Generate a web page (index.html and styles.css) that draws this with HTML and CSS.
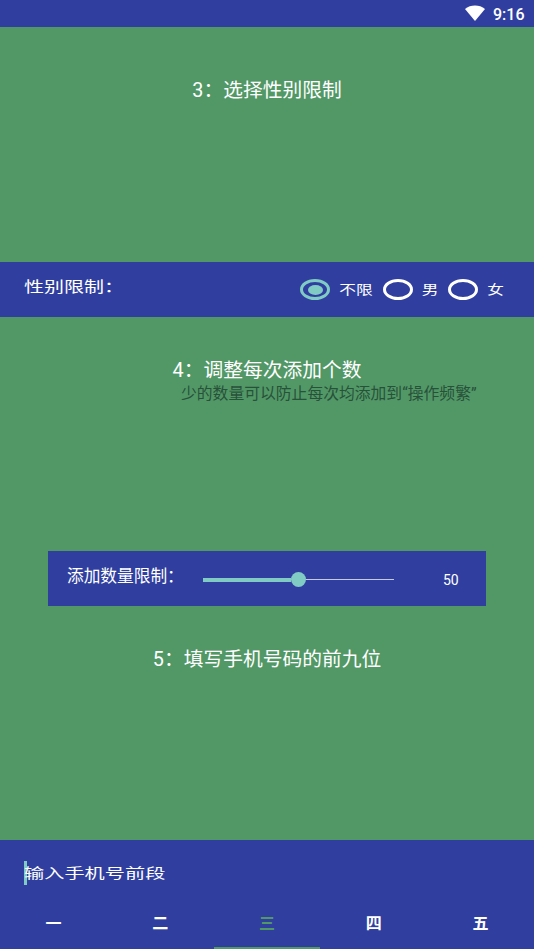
FILE: index.html
```html
<!DOCTYPE html>
<html lang="zh">
	<head>
		<meta charset="utf-8">
		<title>添加</title>
		<link rel="stylesheet" href="styles.css">
	</head>
	<body>
		<div class="statusbar">
			<svg class="wifi" width="20" height="16" viewBox="0 0 20 16"><path d="M0 4 C5.500 -0.600 14.500 -0.600 20 4 L10 16 Z" fill="#fff"/></svg>
			<span class="time">9:16</span>
		</div>

		<div class="content">
			<div class="step step-first">
				<div class="title">3：选择性别限制</div>
			</div>
			<div class="bar bar-gender">
				<div class="gender-label">性别限制：</div>
				<div class="radios">
					<span class="radio checked"><i></i></span><span class="radio-text">不限</span>
					<span class="radio"></span><span class="radio-text">男</span>
					<span class="radio"></span><span class="radio-text">女</span>
				</div>
			</div>
			<div class="step">
				<div class="title">4：调整每次添加个数</div>
				<div class="subtitle">少的数量可以防止每次均添加到“操作频繁”</div>
			</div>
			<div class="bar bar-count">
				<div class="count-label">添加数量限制：</div>
				<div class="slider">
					<div class="slider-done"></div>
					<div class="slider-thumb"></div>
					<div class="slider-rest"></div>
				</div>
				<div class="count-value">50</div>
			</div>
			<div class="step step-last">
				<div class="title">5：填写手机号码的前九位</div>
			</div>
		</div>

		<div class="bottom">
			<div class="phone">
				<span class="cursor"></span><span class="phone-hint">输入手机号前段</span>
			</div>
			<div class="tabs">
				<div class="tab">一</div>
				<div class="tab">二</div>
				<div class="tab active">三</div>
				<div class="tab">四</div>
				<div class="tab">五</div>
			</div>
		</div>
	</body>
</html>
```

FILE: styles.css
```css
html, body {
	margin: 0;
	padding: 0;
}

body {
	width: 534px;
	height: 949px;
	overflow: hidden;
	display: flex;
	flex-direction: column;
	background: #529866;
	color: #FFF;
	font-family: Roboto, "Noto Sans CJK SC", sans-serif;
}

.statusbar {
	height: 27px;
	flex: none;
	display: flex;
	align-items: center;
	justify-content: flex-end;
	padding-right: 9.500px;
	background: #303F9F;
}

.wifi {
	margin: 0 8px 1px 0;
}

.time {
	font-weight: 500;
	font-size: 16px;
	padding-top: 2px;
}

.content {
	flex: 1;
	display: flex;
	flex-direction: column;
}

.step {
	height: 192px;
	padding-top: 42px;
	display: flex;
	flex-direction: column;
	align-items: center;
}

.step-first {
	height: 183px;
	padding-top: 52px;
}

.title {
	font-size: 19.750px;
	line-height: 24px;
}

.subtitle {
	align-self: flex-start;
	margin: -1px 0 0 181px;
	font-size: 15.800px;
	line-height: 24px;
	color: #28513A;
}

.bar {
	height: 55px;
	flex: none;
	display: flex;
	align-items: center;
	background: #303F9F;
}

.bar-gender {
	padding-left: 24px;
}

.gender-label {
	font-size: 20px;
	line-height: 24px;
	margin-bottom: 6px;
	transform: scaleY(.75);
	transform-origin: left center;
}

.radios {
	margin-left: auto;
	margin-right: 30px;
	display: flex;
	align-items: center;
}

.radio {
	width: 30px;
	height: 21px;
	box-sizing: border-box;
	border: 3px solid #FFF;
	border-radius: 50%;
	display: flex;
	align-items: center;
	justify-content: center;
}

.radio.checked {
	border-color: #80CBC4;
}

.radio i {
	width: 15px;
	height: 10px;
	border-radius: 50%;
	background: #80CBC4;
}

.radio-text {
	margin: 0 10px 0 9px;
	font-size: 16.700px;
	line-height: 20px;
	transform: scaleY(.78);
}

.radio-text:last-child {
	margin-right: 0;
}

.bar-count {
	margin: 0 48px;
	padding-left: 19px;
}

.count-label {
	width: 136px;
	flex: none;
	font-size: 16.700px;
	line-height: 24px;
	margin-bottom: 3px;
}

.slider {
	width: 191px;
	flex: none;
	display: flex;
	align-items: center;
	margin-top: 2px;
}

.slider-done {
	width: 88px;
	height: 4px;
	background: #80CBC4;
}

.slider-thumb {
	width: 15px;
	height: 15px;
	flex: none;
	border-radius: 50%;
	background: #80CBC4;
}

.slider-rest {
	flex: 1;
	height: 1.500px;
	background: #C5CAE9;
}

.count-value {
	margin-left: 49px;
	font-size: 14px;
	padding-top: 2px;
}

.bottom {
	height: 109px;
	flex: none;
	background: #303F9F;
	display: flex;
	flex-direction: column;
}

.phone {
	height: 62px;
	padding-left: 24px;
	display: flex;
	align-items: center;
	margin-top: 2px;
}

.cursor {
	width: 2.500px;
	height: 24px;
	flex: none;
	background: #80CBC4;
}

.phone-hint {
	margin-left: -2.500px;
	font-size: 20.200px;
	line-height: 24px;
	transform: scaleY(.68);
}

.tabs {
	flex: 1;
	display: flex;
}

.tab {
	flex: 1;
	box-sizing: border-box;
	display: flex;
	align-items: center;
	justify-content: center;
	padding-bottom: 7px;
	font-size: 16px;
	font-weight: 700;
	border-bottom: 2px solid transparent;
}

.tab.active {
	color: #529866;
	border-bottom-color: #529866;
}
```
